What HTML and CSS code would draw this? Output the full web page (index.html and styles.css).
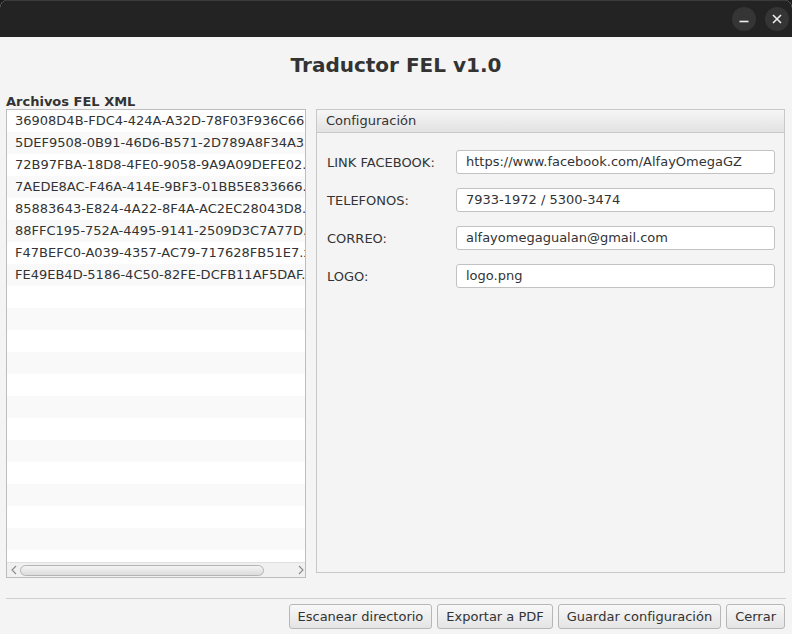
FILE: index.html
```html
<!DOCTYPE html>
<html lang="es">
<head>
<meta charset="utf-8">
<title>Traductor FEL v1.0</title>
<link rel="stylesheet" href="styles.css">
</head>
<body>
<div class="window">
  <div class="titlebar">
    <div class="wbtn"><svg width="24" height="24" viewBox="0 0 24 24"><line x1="7.5" y1="14.5" x2="16.5" y2="14.5" stroke="#eee" stroke-width="1.6"/></svg></div>
    <div class="wbtn"><svg width="24" height="24" viewBox="0 0 24 24"><path d="M8 8 L16 16 M16 8 L8 16" stroke="#eee" stroke-width="1.6"/></svg></div>
  </div>
  <div class="content">
    <h1 class="app-title">Traductor FEL v1.0</h1>
    <div class="main">
      <div class="left">
        <div class="list-label">Archivos FEL XML</div>
        <div class="list">
          <div class="rows">
            <div class="row">36908D4B-FDC4-424A-A32D-78F03F936C66.xml</div>
            <div class="row">5DEF9508-0B91-46D6-B571-2D789A8F34A3.xml</div>
            <div class="row">72B97FBA-18D8-4FE0-9058-9A9A09DEFE02.xml</div>
            <div class="row">7AEDE8AC-F46A-414E-9BF3-01BB5E833666.xml</div>
            <div class="row">85883643-E824-4A22-8F4A-AC2EC28043D8.xml</div>
            <div class="row">88FFC195-752A-4495-9141-2509D3C7A77D.xml</div>
            <div class="row">F47BEFC0-A039-4357-AC79-717628FB51E7.xml</div>
            <div class="row">FE49EB4D-5186-4C50-82FE-DCFB11AF5DAF.xml</div>
            <div class="row"></div><div class="row"></div><div class="row"></div><div class="row"></div>
            <div class="row"></div><div class="row"></div><div class="row"></div><div class="row"></div>
            <div class="row"></div><div class="row"></div><div class="row"></div><div class="row"></div>
            <div class="row"></div><div class="row"></div>
          </div>
          <div class="hscroll">
            <svg class="arrow" width="10" height="14" viewBox="0 0 10 14"><path d="M7 3 L3 7 L7 11" fill="none" stroke="#8a8a8a" stroke-width="1.1"/></svg>
            <div class="track"><div class="thumb"></div></div>
            <svg class="arrow" width="10" height="14" viewBox="0 0 10 14"><path d="M3 3 L7 7 L3 11" fill="none" stroke="#8a8a8a" stroke-width="1.1"/></svg>
          </div>
        </div>
      </div>
      <div class="right">
        <div class="panel">
          <div class="panel-head">Configuración</div>
          <div class="panel-body">
            <label class="flabel">LINK FACEBOOK:</label><div class="field">https://www.facebook.com/AlfayOmegaGZ</div>
            <label class="flabel">TELEFONOS:</label><div class="field">7933-1972 / 5300-3474</div>
            <label class="flabel">CORREO:</label><div class="field">alfayomegagualan@gmail.com</div>
            <label class="flabel">LOGO:</label><div class="field">logo.png</div>
          </div>
        </div>
      </div>
    </div>
    <div class="separator"></div>
    <div class="actions">
      <button class="btn">Escanear directorio</button>
      <button class="btn">Exportar a PDF</button>
      <button class="btn">Guardar configuración</button>
      <button class="btn">Cerrar</button>
    </div>
  </div>
</div>
</body>
</html>
```
FILE: styles.css
```css
* { box-sizing: border-box; }
html, body { margin: 0; padding: 0; }
body {
  background: #1c1c20;
  font-family: "DejaVu Sans", "Liberation Sans", sans-serif;
  font-size: 13px;
  color: #333;
  width: 792px;
  height: 634px;
  overflow: hidden;
}
.window {
  width: 792px;
  height: 634px;
  border-radius: 8px 8px 0 0;
  overflow: hidden;
  background: #f4f4f4;
}
.titlebar {
  height: 37px;
  background: #232323;
  box-shadow: inset 0 1px 0 #3a3a3a;
  display: flex;
  justify-content: flex-end;
  align-items: center;
  gap: 9px;
  padding-right: 3px;
}
.wbtn {
  width: 24px;
  height: 24px;
  border-radius: 50%;
  background: #353535;
  display: flex;
}
.content {
  padding: 0 6px 0 6px;
}
.app-title {
  margin: 0;
  padding-top: 16px;
  height: 56px;
  font-size: 20px;
  line-height: 24px;
  font-weight: bold;
  text-align: center;
  color: #333;
}
.main {
  display: grid;
  grid-template-columns: 300px 469px;
  column-gap: 10px;
}
.list-label {
  font-weight: bold;
  line-height: 16px;
  height: 16px;
  padding-top: 1px;
}
.list {
  height: 469px;
  border: 1px solid #bdbdbd;
  background: #fff;
  display: flex;
  flex-direction: column;
  overflow: hidden;
}
.rows {
  flex: 1;
  overflow: hidden;
}
.row {
  height: 22px;
  line-height: 22px;
  padding-left: 8px;
  white-space: nowrap;
  overflow: hidden;
  background: #fff;
}
.row:nth-child(even) { background: #f9f9f9; }
.hscroll {
  height: 15px;
  flex: none;
  display: flex;
  align-items: center;
  background: #f0f0f0;
  border-top: 1px solid #e0e0e0;
}
.arrow { flex: none; margin: 0 1px 0 2px; }
.track { flex: 1; height: 13px; display: flex; align-items: center; padding-right: 30px; }
.thumb {
  width: 244px;
  height: 11px;
  border: 1px solid #b4b4b4;
  border-radius: 6px;
  background: linear-gradient(#f4f4f4, #dcdcdc);
}
.right { padding-top: 16px; }
.panel {
  height: 464px;
  border: 1px solid #c8c8c8;
}
.panel-head {
  height: 23px;
  line-height: 22px;
  padding-left: 9px;
  background: linear-gradient(#f6f6f6, #e2e2e2);
  border-bottom: 1px solid #c8c8c8;
}
.panel-body {
  display: grid;
  grid-template-columns: 129px 319px;
  row-gap: 14px;
  padding: 17px 9px 0 10px;
  align-items: center;
}
.field {
  height: 24px;
  line-height: 22px;
  border: 1px solid #c2c2c2;
  border-radius: 3px;
  background: #fff;
  padding-left: 9px;
  white-space: nowrap;
  overflow: hidden;
}
.separator {
  height: 1px;
  background: #d0d0d0;
  margin-top: 20px;
}
.actions {
  display: flex;
  justify-content: flex-end;
  gap: 5px;
  margin-top: 5px;
  padding-right: 1px;
}
.btn {
  font-family: "DejaVu Sans", "Liberation Sans", sans-serif;
  font-size: 13px;
  color: #333;
  height: 25px;
  padding: 0 8px;
  border: 1px solid #b7b7b7;
  border-radius: 3px;
  background: linear-gradient(#f8f8f8, #e4e4e4);
}
```
